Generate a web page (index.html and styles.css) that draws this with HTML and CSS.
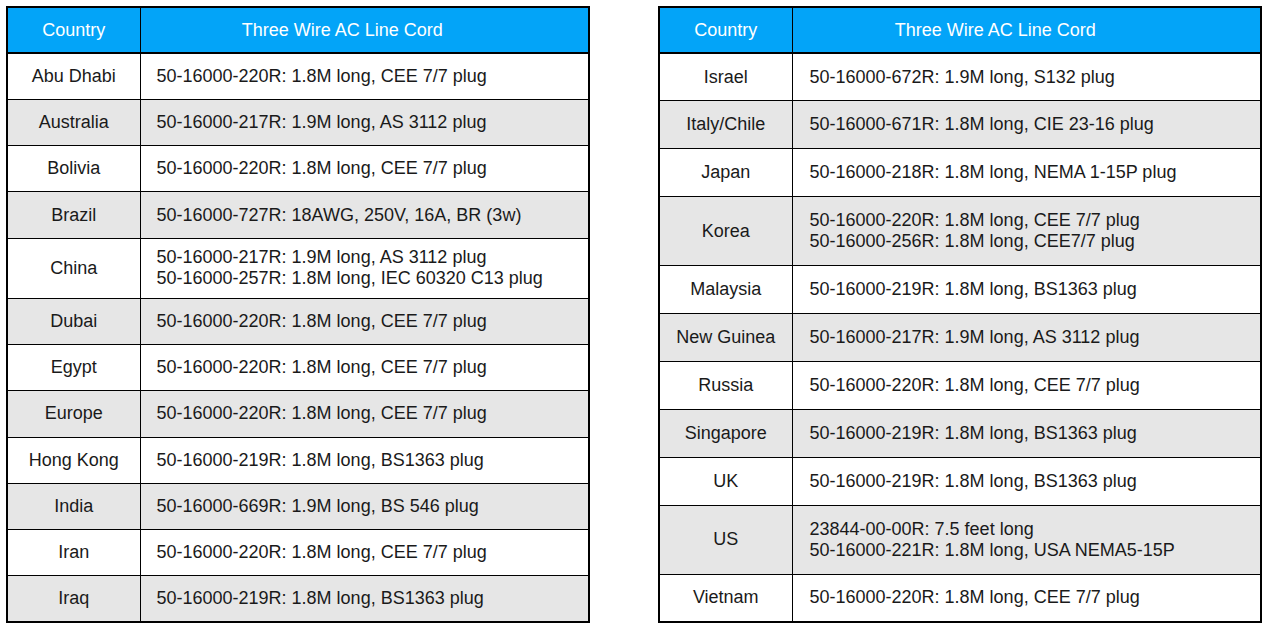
FILE: index.html
```html
<!DOCTYPE html>
<html>
<head>
<meta charset="utf-8">
<link rel="stylesheet" href="styles.css">
</head>
<body>
<div class="page">
  <table class="cords cords-left">
    <colgroup><col class="c1"><col></colgroup>
    <thead><tr class="head"><th>Country</th><th class="title">Three Wire AC Line Cord</th></tr></thead>
    <tbody>
      <tr class="r"><td>Abu Dhabi</td><td>50-16000-220R: 1.8M long, CEE 7/7 plug</td></tr>
      <tr class="r g"><td>Australia</td><td>50-16000-217R: 1.9M long, AS 3112 plug</td></tr>
      <tr class="r"><td>Bolivia</td><td>50-16000-220R: 1.8M long, CEE 7/7 plug</td></tr>
      <tr class="r g"><td>Brazil</td><td>50-16000-727R: 18AWG, 250V, 16A, BR (3w)</td></tr>
      <tr class="r2"><td>China</td><td>50-16000-217R: 1.9M long, AS 3112 plug<br>50-16000-257R: 1.8M long, IEC 60320 C13 plug</td></tr>
      <tr class="r g"><td>Dubai</td><td>50-16000-220R: 1.8M long, CEE 7/7 plug</td></tr>
      <tr class="r"><td>Egypt</td><td>50-16000-220R: 1.8M long, CEE 7/7 plug</td></tr>
      <tr class="r g"><td>Europe</td><td>50-16000-220R: 1.8M long, CEE 7/7 plug</td></tr>
      <tr class="r"><td>Hong Kong</td><td>50-16000-219R: 1.8M long, BS1363 plug</td></tr>
      <tr class="r g"><td>India</td><td>50-16000-669R: 1.9M long, BS 546 plug</td></tr>
      <tr class="r"><td>Iran</td><td>50-16000-220R: 1.8M long, CEE 7/7 plug</td></tr>
      <tr class="r g"><td>Iraq</td><td>50-16000-219R: 1.8M long, BS1363 plug</td></tr>
    </tbody>
  </table>
  <table class="cords cords-right">
    <colgroup><col class="c1"><col></colgroup>
    <thead><tr class="head"><th>Country</th><th class="title">Three Wire AC Line Cord</th></tr></thead>
    <tbody>
      <tr class="rr"><td>Israel</td><td>50-16000-672R: 1.9M long, S132 plug</td></tr>
      <tr class="rr g"><td>Italy/Chile</td><td>50-16000-671R: 1.8M long, CIE 23-16 plug</td></tr>
      <tr class="rr"><td>Japan</td><td>50-16000-218R: 1.8M long, NEMA 1-15P plug</td></tr>
      <tr class="rr2 g"><td>Korea</td><td>50-16000-220R: 1.8M long, CEE 7/7 plug<br>50-16000-256R: 1.8M long, CEE7/7 plug</td></tr>
      <tr class="rr"><td>Malaysia</td><td>50-16000-219R: 1.8M long, BS1363 plug</td></tr>
      <tr class="rr g"><td>New Guinea</td><td>50-16000-217R: 1.9M long, AS 3112 plug</td></tr>
      <tr class="rr"><td>Russia</td><td>50-16000-220R: 1.8M long, CEE 7/7 plug</td></tr>
      <tr class="rr g"><td>Singapore</td><td>50-16000-219R: 1.8M long, BS1363 plug</td></tr>
      <tr class="rr"><td>UK</td><td>50-16000-219R: 1.8M long, BS1363 plug</td></tr>
      <tr class="rr2 g"><td>US</td><td>23844-00-00R: 7.5 feet long<br>50-16000-221R: 1.8M long, USA NEMA5-15P</td></tr>
      <tr class="rr"><td>Vietnam</td><td>50-16000-220R: 1.8M long, CEE 7/7 plug</td></tr>
    </tbody>
  </table>
</div>
</body>
</html>
```

FILE: styles.css
```css
html, body {
  margin: 0;
  padding: 0;
  background: #ffffff;
}
body {
  font-family: "Liberation Sans", Arial, sans-serif;
  color: #1a1a1a;
}
.page {
  display: flex;
  align-items: flex-start;
  gap: 68px;
  padding: 6px 0 0 6px;
}
.cords {
  border-collapse: collapse;
  table-layout: fixed;
  border: 2px solid #000;
  font-size: 18px;
  line-height: 21px;
}
.cords-left { width: 584px; }
.cords-right { width: 604px; }
.c1 { width: 133px; }
.cords th {
  background: #03a4f8;
  color: #ffffff;
  font-weight: normal;
  text-align: center;
  height: 44px;
  padding: 0;
  border: 1px solid #000;
  border-bottom: 2px solid #000;
}
.cords-left .title { padding-right: 44px; }
.cords-right .title { padding-right: 62px; }
.cords td {
  border: 1px solid #000;
  padding: 0 0 0 16px;
  text-align: left;
  vertical-align: middle;
}
.cords td:first-child {
  text-align: center;
  padding: 0;
}
.cords-right td { padding-left: 17px; }
.r { height: 46.3px; }
.r2 { height: 60px; }
.rr { height: 47.9px; }
.rr2 { height: 69px; }
.g td { background: #e6e6e6; }
```
